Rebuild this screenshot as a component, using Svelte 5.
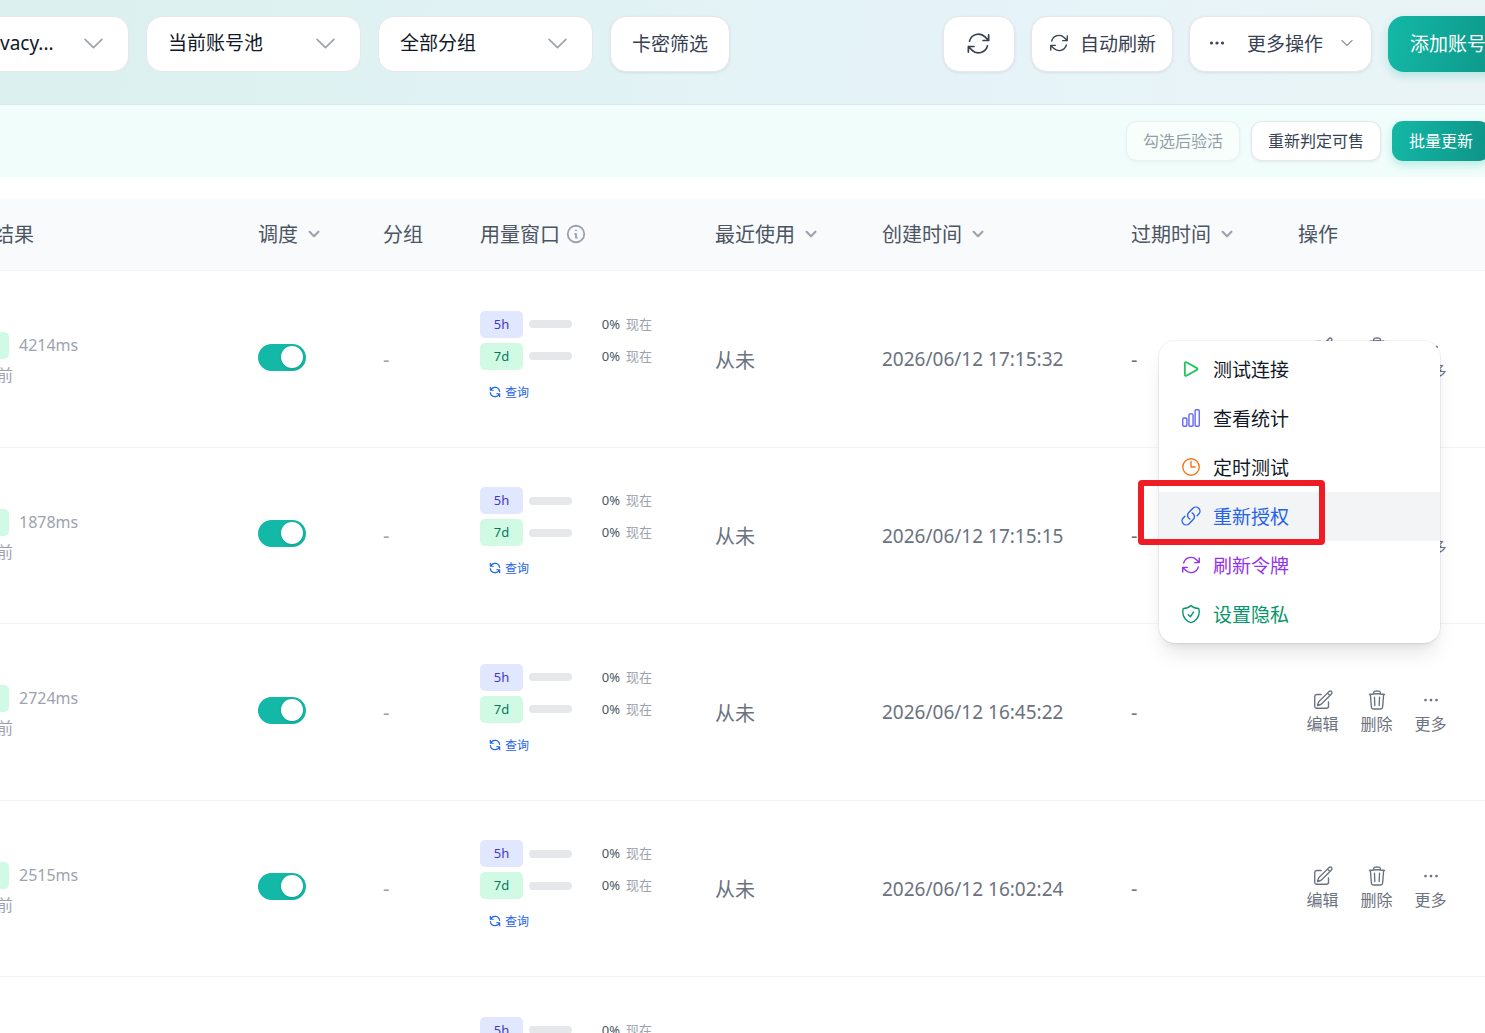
<script lang="ts">
	type IconName = keyof typeof icons;

	const icons = {
		refresh:
			'M16.023 9.348h4.992v-.001M2.985 19.644v-4.992m0 0h4.992m-4.993 0l3.181 3.183a8.25 8.25 0 0013.803-3.7M4.031 9.865a8.25 8.25 0 0113.803-3.7l3.181 3.182m0-4.991v4.99',
		sync: 'M4 4v5h.582m15.356 2A8.001 8.001 0 004.582 9m0 0H9m11 11v-5h-.581m0 0a8.003 8.003 0 01-15.357-2m15.357 2H15',
		chevron: 'M19.5 8.25l-7.5 7.5-7.5-7.5',
		dots: 'M6.75 12a.75.75 0 11-1.5 0 .75.75 0 011.5 0zM12.75 12a.75.75 0 11-1.5 0 .75.75 0 011.5 0zM18.75 12a.75.75 0 11-1.5 0 .75.75 0 011.5 0z',
		edit: 'M16.862 4.487l1.687-1.688a1.875 1.875 0 112.652 2.652L10.582 16.07a4.5 4.5 0 01-1.897 1.13L6 18l.8-2.685a4.5 4.5 0 011.13-1.897l8.932-8.931zm0 0L19.5 7.125M18 14v4.75A2.25 2.25 0 0115.75 21H5.25A2.25 2.25 0 013 18.75V8.25A2.25 2.25 0 015.25 6H10',
		trash:
			'M14.74 9l-.346 9m-4.788 0L9.26 9m9.968-3.21c.342.052.682.107 1.022.166m-1.022-.165L18.16 19.673a2.25 2.25 0 01-2.244 2.077H8.084a2.25 2.25 0 01-2.244-2.077L4.772 5.79m14.456 0a48.108 48.108 0 00-3.478-.397m-12 .562c.34-.059.68-.114 1.022-.165m0 0a48.11 48.11 0 013.478-.397m7.5 0v-.916c0-1.18-.91-2.164-2.09-2.201a51.964 51.964 0 00-3.32 0c-1.18.037-2.09 1.022-2.09 2.201v.916m7.5 0a48.667 48.667 0 00-7.5 0',
		info: 'M13 16h-1v-4h-1m1-4h.01M21 12a9 9 0 11-18 0 9 9 0 0118 0z',
		play: 'M5.25 5.653c0-.856.917-1.398 1.667-.986l11.54 6.347a1.125 1.125 0 010 1.972l-11.54 6.347a1.125 1.125 0 01-1.667-.986V5.653z',
		chart:
			'M3 13.125C3 12.504 3.504 12 4.125 12h2.25c.621 0 1.125.504 1.125 1.125v6.75C7.5 20.496 6.996 21 6.375 21h-2.25A1.125 1.125 0 013 19.875v-6.75zM9.75 8.625c0-.621.504-1.125 1.125-1.125h2.25c.621 0 1.125.504 1.125 1.125v11.25c0 .621-.504 1.125-1.125 1.125h-2.25a1.125 1.125 0 01-1.125-1.125V8.625zM16.5 4.125c0-.621.504-1.125 1.125-1.125h2.25C20.496 3 21 3.504 21 4.125v15.75c0 .621-.504 1.125-1.125 1.125h-2.25a1.125 1.125 0 01-1.125-1.125V4.125z',
		clock: 'M12 6v6h4.5m4.5 0a9 9 0 11-18 0 9 9 0 0118 0z',
		link: 'M13.19 8.688a4.5 4.5 0 011.242 7.244l-4.5 4.5a4.5 4.5 0 01-6.364-6.364l1.757-1.757m13.35-.622l1.757-1.757a4.5 4.5 0 00-6.364-6.364l-4.5 4.5a4.5 4.5 0 001.242 7.244',
		shield:
			'M9 12.75L11.25 15 15 9.75m-3-7.036A11.959 11.959 0 013.598 6 11.99 11.99 0 003 9.749c0 5.592 3.824 10.29 9 11.623 5.176-1.332 9-6.03 9-11.622 0-1.31-.21-2.571-.598-3.751h-.152c-3.196 0-6.1-1.248-8.25-3.285z'
	};

	const rows = [
		{ latency: '4214ms', created: '2026/06/12 17:15:32' },
		{ latency: '1878ms', created: '2026/06/12 17:15:15' },
		{ latency: '2724ms', created: '2026/06/12 16:45:22' },
		{ latency: '2515ms', created: '2026/06/12 16:02:24' },
		{ latency: '2630ms', created: '2026/06/12 16:02:10' }
	];

	const usage = [
		{ label: '5h', tone: 'indigo', percent: 0 },
		{ label: '7d', tone: 'green', percent: 0 }
	];

	const actions: { icon: IconName; label: string }[] = [
		{ icon: 'edit', label: '编辑' },
		{ icon: 'trash', label: '删除' },
		{ icon: 'dots', label: '更多' }
	];

	const menu: { icon: IconName; label: string; tone: string; stroke?: number }[] = [
		{ icon: 'play', label: '测试连接', tone: 'play', stroke: 2 },
		{ icon: 'chart', label: '查看统计', tone: 'stats' },
		{ icon: 'clock', label: '定时测试', tone: 'schedule' },
		{ icon: 'link', label: '重新授权', tone: 'reauth' },
		{ icon: 'refresh', label: '刷新令牌', tone: 'token' },
		{ icon: 'shield', label: '设置隐私', tone: 'privacy' }
	];
</script>

{#snippet icon(name: IconName, size = 22, stroke = 1.5)}
	<svg
		width={size}
		height={size}
		viewBox="0 0 24 24"
		fill="none"
		stroke="currentColor"
		stroke-width={stroke}
		stroke-linecap="round"
		stroke-linejoin="round"
		aria-hidden="true"
	>
		<path d={icons[name]} />
	</svg>
{/snippet}

{#snippet sortable(label: string)}
	<button class="sort">
		<span>{label}</span>
		<svg width="22" height="22" viewBox="0 0 20 20" fill="#9ca3af" aria-hidden="true">
			<path
				fill-rule="evenodd"
				d="M5.293 7.293a1 1 0 011.414 0L10 10.586l3.293-3.293a1 1 0 111.414 1.414l-4 4a1 1 0 01-1.414 0l-4-4a1 1 0 010-1.414z"
			/>
		</svg>
	</button>
{/snippet}

{#snippet filter(label: string, name: string, edge = false)}
	<div class="select" class:edge>
		<select aria-label={name}>
			<option>{label}</option>
		</select>
		{@render icon('chevron', 27)}
	</div>
{/snippet}

<div class="page">
	<header class="toolbar">
		<div class="group">
			{@render filter('vacy...', '隐私', true)}
			{@render filter('当前账号池', '账号池')}
			{@render filter('全部分组', '分组')}
			<button class="btn wide">卡密筛选</button>
		</div>
		<div class="group end">
			<button class="btn square" aria-label="刷新">{@render icon('refresh', 27)}</button>
			<button class="btn">{@render icon('refresh')}自动刷新</button>
			<button class="btn more">
				{@render icon('dots', 22, 2)}
				<span>更多操作</span>
				{@render icon('chevron', 16)}
			</button>
			<button class="btn wide primary">添加账号</button>
		</div>
	</header>

	<div class="bulk">
		<button class="btn small" disabled>勾选后验活</button>
		<button class="btn small">重新判定可售</button>
		<button class="btn small primary">批量更新</button>
	</div>

	<table>
		<colgroup>
			<col class="c-result" />
			<col class="c-schedule" />
			<col class="c-group" />
			<col class="c-usage" />
			<col class="c-last" />
			<col class="c-created" />
			<col class="c-expire" />
			<col />
		</colgroup>
		<thead>
			<tr>
				<th class="result"><div class="cut head">结果</div></th>
				<th>{@render sortable('调度')}</th>
				<th>分组</th>
				<th><span class="with-info"><span>用量窗口</span>{@render icon('info', 22, 2)}</span></th>
				<th>{@render sortable('最近使用')}</th>
				<th>{@render sortable('创建时间')}</th>
				<th>{@render sortable('过期时间')}</th>
				<th>操作</th>
			</tr>
		</thead>
		<tbody>
			{#each rows as row}
				<tr>
					<td class="result">
						<div class="latency"><i></i>{row.latency}</div>
						<div class="cut ago">前</div>
					</td>
					<td><input class="toggle" type="checkbox" role="switch" aria-label="调度" checked /></td>
					<td class="none">-</td>
					<td>
						<div class="usage">
							{#each usage as item}
								<div class="meter">
									<span class="tag {item.tone}">{item.label}</span>
									<span class="bar"><i style="width: {item.percent}%"></i></span>
									<span class="percent">{item.percent}%</span>
									<span class="reset">现在</span>
								</div>
							{/each}
							<button class="query">{@render icon('sync', 14, 2)}查询</button>
						</div>
					</td>
					<td>从未</td>
					<td class="date">{row.created}</td>
					<td>-</td>
					<td>
						<div class="actions">
							{#each actions as action}
								<button>{@render icon(action.icon)}{action.label}</button>
							{/each}
						</div>
					</td>
				</tr>
			{/each}
		</tbody>
	</table>

	<div class="menu" role="menu">
		{#each menu as item}
			<button class="item {item.tone}" role="menuitem">
				{@render icon(item.icon, 22, item.stroke ?? 1.5)}
				<span>{item.label}</span>
				{#if item.tone === 'reauth'}
					<i class="marker"></i>
				{/if}
			</button>
		{/each}
	</div>
</div>

<style>
	.page {
		position: relative;
		height: 100vh;
		overflow: hidden;
		background: #fff;
		color: #6b7280;
		font-family: 'Noto Sans', 'Noto Sans CJK SC', sans-serif;
		font-size: 19px;
	}

	.page *,
	.page *::before {
		box-sizing: border-box;
	}

	svg {
		display: block;
		flex: none;
	}

	button,
	select {
		font: inherit;
		color: inherit;
		margin: 0;
		padding: 0;
		border: 0;
		background: none;
		cursor: pointer;
		white-space: nowrap;
	}

	/* Toolbar */
	.toolbar {
		display: flex;
		justify-content: space-between;
		padding: 16px 0 32px;
		border-bottom: 1px solid #e2e5ea;
		background: linear-gradient(100deg, #dcf0ef 0%, #e0f2f3 33%, #e5f3f8 63%, #eaf4f6 100%);
	}

	.group {
		display: flex;
		gap: 17px;
	}

	/* The last button runs past the window edge */
	.group.end {
		gap: 16px;
		margin-right: -23px;
	}

	.select {
		position: relative;
		width: 215px;
		color: #9ca3af;
	}

	.select.edge {
		width: 129px;
	}

	.select select {
		appearance: none;
		width: 100%;
		height: 56px;
		padding: 0 50px 2px 21px;
		border: 1px solid #e5e7eb;
		border-radius: 16px;
		background: #fff;
		color: #111827;
	}

	.select.edge select {
		padding-left: 0;
		border-left: 0;
		border-radius: 0 16px 16px 0;
	}

	.select svg {
		position: absolute;
		top: 14px;
		right: 22px;
		pointer-events: none;
	}

	.btn {
		display: flex;
		align-items: center;
		justify-content: center;
		gap: 10px;
		height: 56px;
		padding: 0 16px 2px;
		border: 1px solid #e5e7eb;
		border-radius: 16px;
		background: #fff;
		color: #374151;
		box-shadow: 0 1px 3px rgba(0, 0, 0, 0.08);
	}

	.btn.wide {
		padding: 0 21px 2px;
	}

	.btn.square {
		width: 72px;
	}

	.btn.more {
		gap: 16px;
	}

	.btn.more span {
		padding-left: 3px;
	}

	.btn.primary {
		border-color: transparent;
		background: linear-gradient(100deg, #14b8a6, #0d9488) border-box;
		color: #fff;
		box-shadow: 0 4px 8px rgba(20, 184, 166, 0.25);
	}

	/* Bulk bar */
	.bulk {
		display: flex;
		justify-content: flex-end;
		gap: 11px;
		margin-right: -5px;
		padding: 16px 0;
		background: #f0fdfa;
	}

	.btn.small {
		height: 40px;
		border-radius: 11px;
		font-size: 16px;
	}

	.btn:disabled {
		opacity: 0.5;
	}

	/* Table */
	table {
		width: 100%;
		margin-top: 22px;
		table-layout: fixed;
		border-collapse: separate;
		border-spacing: 0;
	}

	.c-result {
		width: 236px;
	}

	.c-schedule {
		width: 125px;
	}

	.c-group {
		width: 97px;
	}

	.c-usage {
		width: 235px;
	}

	.c-last,
	.c-expire {
		width: 167px;
	}

	.c-created {
		width: 249px;
	}

	th,
	td {
		padding: 0 0 0 22px;
		text-align: left;
		vertical-align: middle;
		white-space: nowrap;
	}

	th {
		height: 71px;
		padding-bottom: 3px;
		background: #f9fafc;
		color: #4b5563;
		font-size: 20px;
		font-weight: 400;
	}

	td {
		height: 176px;
		border-top: 1px solid #f3f4f6;
		font-size: 20px;
	}

	tr:nth-child(odd) td {
		height: 177px;
	}

	.result {
		padding-left: 0;
	}

	.sort,
	.with-info {
		display: flex;
		align-items: center;
		gap: 5px;
	}

	.sort svg,
	.with-info svg {
		margin-top: 2px;
		color: #9ca3af;
	}

	/* Text that slides out under the left edge */
	.cut {
		display: flex;
		justify-content: flex-end;
		overflow: hidden;
	}

	.cut.head {
		width: 34px;
	}

	.cut.ago {
		width: 13px;
		margin-top: 5px;
		color: #9ca3af;
		font-size: 16px;
		line-height: 22px;
	}

	.latency {
		display: flex;
		align-items: center;
		gap: 10px;
		color: #9ca3af;
		font-size: 16px;
		line-height: 27px;
	}

	.latency i {
		width: 9px;
		height: 27px;
		border-radius: 0 5px 5px 0;
		background: #d1fae5;
	}

	.toggle {
		appearance: none;
		display: block;
		width: 48px;
		height: 27px;
		margin: 0 0 4px;
		padding: 2px 3px;
		border-radius: 14px;
		background: #14b8a6;
		cursor: pointer;
	}

	.toggle::before {
		content: '';
		display: block;
		width: 22px;
		height: 22px;
		margin-left: auto;
		border-radius: 50%;
		background: #fff;
		box-shadow: 0 1px 3px rgba(0, 0, 0, 0.15);
	}

	.none {
		color: #9ca3af;
	}

	.date {
		font-size: 19px;
	}

	.usage {
		display: flex;
		flex-direction: column;
		align-items: flex-start;
		gap: 5px;
		padding-bottom: 4px;
	}

	.meter {
		display: flex;
		align-items: center;
		font-size: 13px;
		line-height: 27px;
	}

	.tag {
		width: 43px;
		border-radius: 5px;
		text-align: center;
	}

	.tag.indigo {
		background: #e0e7ff;
		color: #4338ca;
	}

	.tag.green {
		background: #d1fae5;
		color: #047857;
	}

	.bar {
		width: 43px;
		height: 8px;
		margin-left: 6px;
		border-radius: 4px;
		background: #e5e7eb;
		overflow: hidden;
	}

	.bar i {
		display: block;
		height: 100%;
		background: #22c55e;
	}

	.percent {
		width: 48px;
		text-align: right;
		color: #4b5563;
	}

	.reset {
		margin-left: 6px;
		color: #9ca3af;
	}

	.query {
		display: flex;
		align-items: center;
		gap: 3px;
		height: 24px;
		margin-top: 5px;
		padding: 0 8px;
		color: #2563eb;
		font-size: 12px;
	}

	.actions {
		display: flex;
		gap: 5px;
	}

	.actions button {
		display: flex;
		flex-direction: column;
		align-items: center;
		gap: 1px;
		width: 49px;
		font-size: 16px;
		line-height: 24px;
	}

	/* Row menu */
	.menu {
		position: absolute;
		top: 341px;
		right: 45px;
		width: 281px;
		padding: 4px 0;
		border-radius: 16px;
		background: #fff;
		color: #111827;
		box-shadow:
			0 0 0 1px rgba(0, 0, 0, 0.05),
			0 14px 20px -4px rgba(0, 0, 0, 0.1),
			0 5px 8px -5px rgba(0, 0, 0, 0.1);
	}

	.item {
		position: relative;
		display: flex;
		align-items: center;
		gap: 11px;
		width: 100%;
		height: 49px;
		padding: 0 21px 1px;
	}

	.play svg {
		color: #22c55e;
	}

	.stats svg {
		color: #6366f1;
	}

	.schedule svg {
		color: #f97316;
	}

	.reauth {
		background: #f3f4f6;
		color: #2563eb;
	}

	.token {
		color: #9333ea;
	}

	.privacy {
		color: #059669;
	}

	.marker {
		position: absolute;
		top: -12px;
		left: -21px;
		width: 187px;
		height: 65px;
		border: 6px solid #ee1c24;
		border-radius: 4px;
		pointer-events: none;
	}
</style>
